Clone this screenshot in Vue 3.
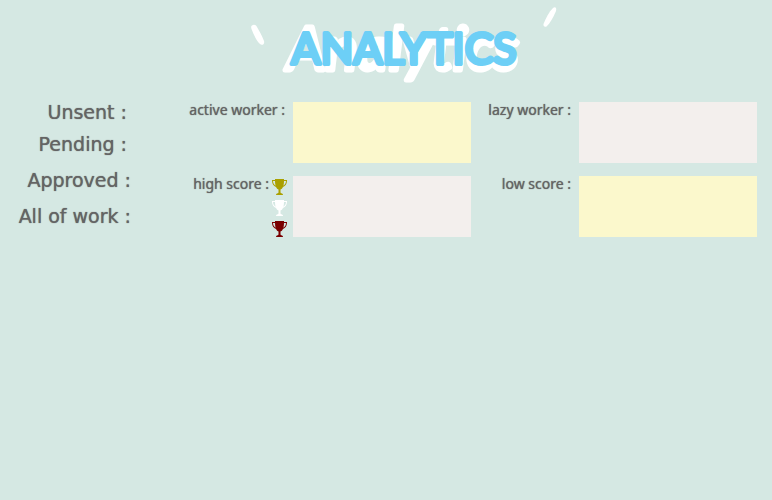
<script setup>
const totals = [['Unsent :', 'Pending :'], ['Approved :'], ['All of work :']]
const trophies = [
  { name: 'First place', tone: 'gold' },
  { name: 'Second place', tone: 'silver' },
  { name: 'Third place', tone: 'bronze' },
]
</script>

<template>
  <main class="page">
    <header class="banner">
      <svg class="tick" viewBox="0 0 14 22" aria-hidden="true">
        <path d="M1 1.500 C3 0 5 1 6 3 C9 8 12 14 13 17 C14 20 11 22 9 20 C5 16 2 9 .500 5 C0 3 0 2 1 1.500Z" />
      </svg>
      <h1 class="title">
        <svg class="logo" viewBox="0 0 250 96">
          <text class="script" x="124" y="70" text-anchor="middle" aria-hidden="true">Analytics</text>
          <text class="caps" x="125" y="64" text-anchor="middle">ANALYTICS</text>
        </svg>
      </h1>
      <svg class="tick high" viewBox="0 0 14 22" aria-hidden="true">
        <path d="M10 2 C12 .500 14 1.500 13 5 C10 12 7 17 4 20 C2 22 0 20 .500 18 C3 12 6 6 10 2Z" />
      </svg>
    </header>

    <section class="board">
      <div class="totals">
        <div v-for="(group, i) in totals" :key="i" class="group">
          <p v-for="label in group" :key="label">{{ label }}</p>
        </div>
      </div>
      <div class="workers">
        <h2 class="label">active worker :</h2>
        <div class="panel yellow"></div>
        <h2 class="label">lazy worker :</h2>
        <div class="panel"></div>
        <div class="label scored">
          <h2 class="score">high score :</h2>
          <div class="trophies">
            <svg v-for="t in trophies" :key="t.tone" :class="['trophy', t.tone]" viewBox="0 0 15 16" role="img" :aria-label="t.name">
              <path d="M3 0h9v1h3c.1 3.500-1.400 6-4 6.900-.6 1.300-1.500 2.200-2.500 2.700v2.600c0 .8.500 1.100 1.500 1.300.7.200 1 .7 1 1.500H4c0-.8.300-1.300 1-1.500 1-.2 1.500-.5 1.500-1.300v-2.600C5.500 10.100 4.600 9.200 4 7.900 1.400 7-.1 4.500 0 1h3zM3 2H1c.1 2 .9 3.800 2.600 4.700C3.200 5.300 3 3.700 3 2zm9 0c0 1.700-.2 3.300-.6 4.700C13.100 5.800 13.900 4 14 2z" />
            </svg>
          </div>
        </div>
        <div class="panel"></div>
        <h2 class="label">low score :</h2>
        <div class="panel yellow"></div>
      </div>
    </section>
  </main>
</template>

<style>
body {
  margin: 0;
  background: #d5e8e3;
}
</style>

<style scoped>
.page {
  color: #646464;
  font-family: "DejaVu Sans", Verdana, sans-serif;
}
.banner {
  display: flex;
  justify-content: center;
  gap: 14px;
  height: 96px;
  padding-left: 36px;
}
.tick {
  width: 14px;
  height: 22px;
  margin-top: 24px;
  fill: #fff;
}
.tick.high {
  margin-top: 6px;
}
.title {
  width: 250px;
  margin: 0;
}
.logo {
  display: block;
  width: 100%;
  height: 96px;
  overflow: visible;
}
.logo text {
  font-family: Lato, sans-serif;
  stroke-linejoin: round;
  stroke-linecap: round;
}
.script {
  fill: #fff;
  stroke: #fff;
  stroke-width: 5px;
  font-size: 61px;
  font-style: italic;
  font-weight: 400;
}
.caps {
  fill: #6dcff6;
  stroke: #6dcff6;
  stroke-width: 4px;
  font-size: 43px;
  font-weight: 400;
}
.board {
  display: grid;
  grid-template-columns: 131px 1fr;
  padding-right: 15px;
}
.totals {
  display: grid;
  align-content: start;
  gap: 4px;
  font-size: 19px;
  line-height: 32px;
  text-align: right;
  text-shadow: 0 0 1px #646464;
}
.totals p {
  margin: 0;
}
.group:first-child {
  padding-right: 4px;
}
.workers {
  display: grid;
  grid-template-columns: 162px 1fr 108px 1fr;
  gap: 13px 0;
  align-content: start;
  padding-top: 6px;
}
.label {
  margin: 0;
  padding-right: 8px;
  font-family: "Noto Sans", Tahoma, sans-serif;
  font-size: 14px;
  font-weight: 400;
  line-height: 16px;
  text-align: right;
  text-shadow: 0 0 1px #646464;
}
.scored {
  display: flex;
  justify-content: flex-end;
  gap: 3px;
  padding-right: 6px;
}
.score {
  margin: 0;
  font: inherit;
}
.trophies {
  display: grid;
  gap: 5px;
  align-content: start;
  padding-top: 3px;
}
.trophy {
  display: block;
  width: 15px;
  height: 16px;
}
.gold {
  fill: #aaa000;
}
.silver {
  fill: #fff;
}
.bronze {
  fill: #790000;
}
.panel {
  height: 61px;
  background: #f3efed;
}
.yellow {
  background: #fbf8cc;
}
</style>
